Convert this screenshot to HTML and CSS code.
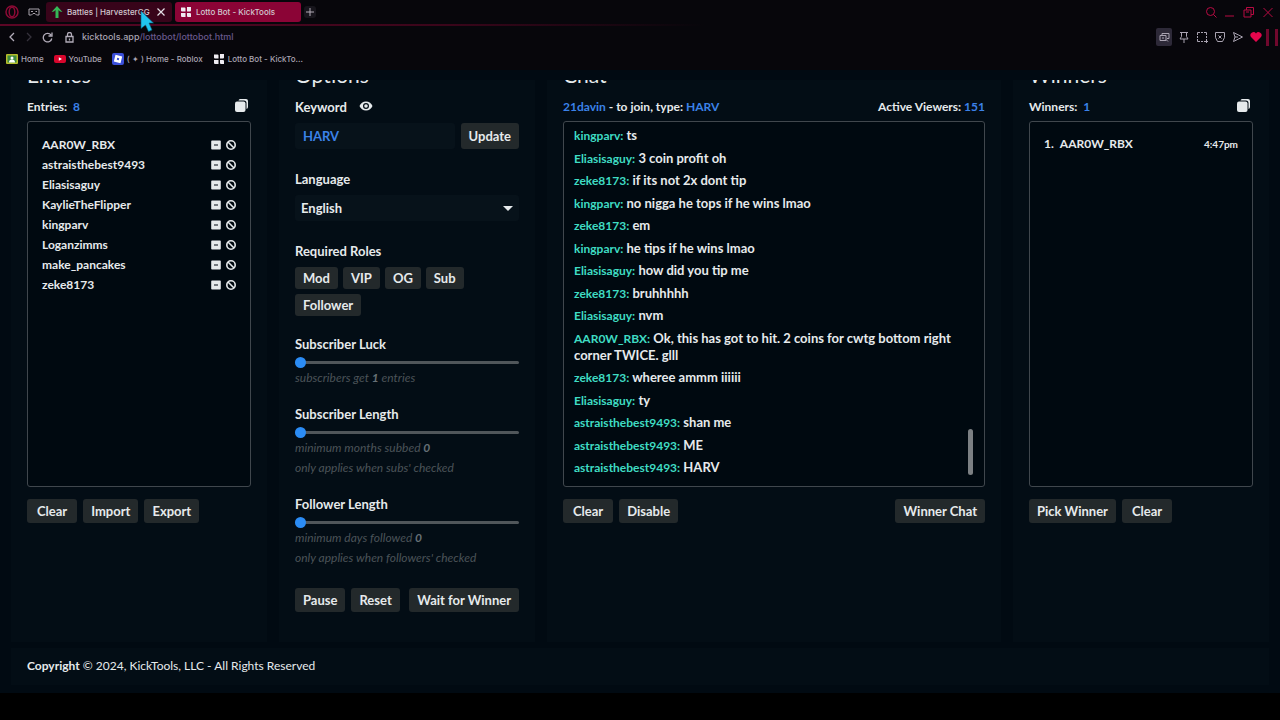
FILE: index.html
```
<!DOCTYPE html>
<html lang="en">
<head>
  <meta charset="utf-8">
  <title>Lotto Bot - KickTools</title>
  <link rel="stylesheet" href="styles.css">
</head>
<body>
  <svg class="sprite" width="0" height="0">
    <symbol id="copy" viewBox="0 0 14 14"><path d="M5 0h6a2 2 0 0 1 2 2v6a2 2 0 0 1-1.500 2V4a2.500 2.500 0 0 0-2.500-2.500H3.500A2 2 0 0 1 5 0z"/><rect x="0" y="2.500" width="10.500" height="10.500" rx="2"/></symbol>
    <symbol id="minus" viewBox="0 0 10 10"><path fill-rule="evenodd" d="M1 0.5h8a.8.8 0 0 1 .8.8v7.4a.8.8 0 0 1-.8.8H1a.8.8 0 0 1-.8-.8V1.300a.8.8 0 0 1 .8-.8zM3 4.400v1.200h4V4.400z"/></symbol>
    <symbol id="ban" viewBox="0 0 10 10"><g fill="none" stroke="currentColor" stroke-width="1.600"><circle cx="5" cy="5" r="4.200"/><path d="M2 2l6 6"/></g></symbol>
    <symbol id="tiles" viewBox="0 0 12 12"><path d="M1 1.500h3.500a1 1 0 0 1 1 1V5.500H2a1 1 0 0 1-1-1zM7 1h4v3.500a1 1 0 0 1-1 1H7zM1 7h4.500v4H2a1 1 0 0 1-1-1zM7 7h3a1 1 0 0 1 1 1v3H8a1 1 0 0 1-1-1z"/></symbol>
  </svg>

  <header class="browser">
    <div class="tab-row">
      <svg class="opera" width="14" height="14" viewBox="0 0 14 14" fill="none" stroke="#8c0a35"><circle cx="7" cy="7" r="6" stroke-width="1.500"/><ellipse cx="7" cy="7" rx="2.800" ry="4.800" stroke-width="1.500"/></svg>
      <svg class="pad" width="12" height="9" viewBox="0 0 12 9" fill="none" stroke="#a9a3ad"><path d="M1 1h10v6H8.500L7 5.500H5L3.500 7H1zM3 3.500h2M7.500 3.500h1.500"/></svg>
      <button class="tab">
        <svg width="12" height="12" viewBox="0 0 12 12"><path d="M6 0l5.500 6-2.500-.5L7.500 4v8h-3V4L3 5.500 .5 6z" fill="#35b857"/></svg>
        <span>Battles | HarvesterGG</span>
        <svg class="tab-close" width="8" height="8" viewBox="0 0 8 8" stroke="#e4dfe6" stroke-width="1.200"><path d="M.5.5l7 7M7.500.5l-7 7"/></svg>
      </button>
      <button class="tab active">
        <svg width="12" height="12" fill="#f3edf1"><use href="#tiles"/></svg>
        <span>Lotto Bot - KickTools</span>
      </button>
      <button class="new-tab" aria-label="New tab"><svg width="8" height="8" viewBox="0 0 8 8" stroke="#b5aeb9"><path d="M4 0v8M0 4h8"/></svg></button>
      <div class="window-icons">
        <svg width="12" height="12" viewBox="0 0 12 12"><circle cx="5.500" cy="5.500" r="4"/><path d="M8.500 8.500l3 3"/></svg>
        <svg width="12" height="12" viewBox="0 0 12 12"><path d="M1 10h9"/></svg>
        <svg width="12" height="12" viewBox="0 0 12 12"><path d="M1 4h7v7H1zM3.500 4V1.500h7V8.500H8M3 6h3"/></svg>
        <svg width="12" height="12" viewBox="0 0 12 12"><path d="M1.500 2l9 9M10.500 2l-9 9"/></svg>
      </div>
    </div>

    <div class="address-row">
      <svg class="nav-icon" width="8" height="10" viewBox="0 0 8 10"><path d="M6 1L2 5l4 4"/></svg>
      <svg class="nav-icon off" width="8" height="10" viewBox="0 0 8 10"><path d="M2 1l4 4-4 4"/></svg>
      <svg class="nav-icon" width="11" height="11" viewBox="0 0 11 11"><path d="M9 3a4.300 4.300 0 1 0 .8 3.500M10 .5V4H6.500"/></svg>
      <svg class="nav-icon lock" width="9" height="11" viewBox="0 0 9 11"><path d="M1 4.500h7v5.500H1zM2.500 4.500V2.500a2 2 0 0 1 4 0v2M4.500 6.500v2"/></svg>
      <p class="url">kicktools.app<span>/lottobot/lottobot.html</span></p>
      <div class="tool-icons">
        <svg class="boxed" width="16" height="18" viewBox="0 0 16 18"><path d="M6 7V5.500h7v5h-2M4 7.500h6v5H4zM6 10l2 0M10 11.500l2 2"/></svg>
        <svg width="12" height="12" viewBox="0 0 12 12"><path d="M2 1.500h8M3.500 1.500v4L2 8h8L8.500 5.500v-4M6 8v4"/></svg>
        <svg width="12" height="12" viewBox="0 0 12 12"><path d="M1.500 4V1.500H4M5 1.500h2M8 1.500h2.500V4M10.500 5v2M1.500 5v2M1.500 8v2.500H4M5 10.500h2M8 10.500h4M10.500 8v4"/></svg>
        <svg width="12" height="12" viewBox="0 0 12 12"><path d="M1.500 1.500h9v5L8.500 10.500h-5l-2-4zM4.500 4.500l3 3M7.500 4.500l-3 3"/></svg>
        <svg width="12" height="12" viewBox="0 0 12 12"><path d="M1.500 1.500L10.500 6l-9 4.500L3 6zM3 6h3"/></svg>
        <svg class="heart" width="12" height="12" viewBox="0 0 12 12"><path d="M6 11L1 6a3 3 0 0 1 5-3.500A3 3 0 0 1 11 6z"/></svg>
        <span class="bars"></span>
      </div>
    </div>

    <nav class="bookmarks">
      <a href="#"><svg width="12" height="10" viewBox="0 0 12 10"><rect width="12" height="10" rx="1" fill="#b7bd2b"/><rect x="1.500" y="1.500" width="9" height="7" fill="#3c8a3f"/><circle cx="6" cy="4" r="1.500" fill="#fff"/><path d="M3 8.500a3 3 0 0 1 6 0z" fill="#fff"/></svg>Home</a>
      <a href="#"><svg width="12" height="10" viewBox="0 0 12 10"><rect y="1" width="12" height="8" rx="2" fill="#d9062c"/><path d="M4.800 3.200L8 5 4.800 6.800z" fill="#fff"/></svg>YouTube</a>
      <a href="#"><svg width="12" height="12" viewBox="0 0 12 12"><rect width="12" height="12" rx="2" fill="#3b4fd8"/><path fill="#fff" fill-rule="evenodd" d="M3.500 1.800l6.700 1.700-1.700 6.700-6.700-1.700zM5.200 4.800l-.4 2 2 .4.400-2z"/></svg>( ✦ ) Home - Roblox</a>
      <a href="#"><svg class="tiles" width="12" height="12"><use href="#tiles"/></svg>Lotto Bot - KickTo...</a>
    </nav>
    <svg class="cursor" width="15" height="24" viewBox="0 0 15 24"><path d="M1 1l12.500 12H9l3 7-3.500 1.500L5.500 15 1 18.500z" fill="#20c4ee" stroke="#0b5d78" stroke-width=".6"/></svg>
  </header>

  <div class="page">
    <main class="columns">
      <section class="panel">
        <h2>Entries</h2>
        <div class="panel-info">
          <span>Entries: &nbsp;<b>8</b></span>
          <button class="icon-button" aria-label="Copy entries"><svg width="14" height="14"><use href="#copy"/></svg></button>
        </div>
        <ul class="box entries" id="entries"></ul>
        <div class="buttons">
          <button class="btn wide">Clear</button>
          <button class="btn">Import</button>
          <button class="btn">Export</button>
        </div>
      </section>

      <section class="panel">
        <h2>Options</h2>
        <div class="options">
          <div class="fields">
            <div class="field">
              <div class="label-row">
                <label for="keyword">Keyword</label>
                <svg width="14" height="10" viewBox="0 0 14 10"><path fill-rule="evenodd" d="M7 .5C10 .5 12.500 2.500 13.500 5 12.500 7.500 10 9.500 7 9.500S1.500 7.500.5 5C1.500 2.500 4 .5 7 .5zM7 2a3 3 0 1 0 0 6 3 3 0 0 0 0-6z"/><circle cx="7" cy="5" r="1.800"/></svg>
              </div>
              <div class="keyword-row">
                <input type="text" id="keyword" value="HARV">
                <button class="btn update">Update</button>
              </div>
            </div>
            <div class="field">
              <label for="language">Language</label>
              <div class="select-wrap">
                <select id="language"><option>English</option></select>
              </div>
            </div>
            <div class="field">
              <span>Required Roles</span>
              <div class="roles">
                <button class="btn">Mod</button>
                <button class="btn">VIP</button>
                <button class="btn">OG</button>
                <button class="btn">Sub</button>
                <button class="btn">Follower</button>
              </div>
            </div>
          </div>
          <div class="sliders">
            <div class="slider">
              <label for="luck">Subscriber Luck</label>
              <input type="range" id="luck" min="1" max="10" value="1">
              <p>subscribers get <b>1</b> entries</p>
            </div>
            <div class="slider">
              <label for="sub-length">Subscriber Length</label>
              <input type="range" id="sub-length" min="0" max="12" value="0">
              <p>minimum months subbed <b>0</b></p>
              <p>only applies when subs' checked</p>
            </div>
            <div class="slider">
              <label for="follow-length">Follower Length</label>
              <input type="range" id="follow-length" min="0" max="30" value="0">
              <p>minimum days followed <b>0</b></p>
              <p>only applies when followers' checked</p>
            </div>
          </div>
          <div class="buttons last-right">
            <button class="btn">Pause</button>
            <button class="btn">Reset</button>
            <button class="btn">Wait for Winner</button>
          </div>
        </div>
      </section>

      <section class="panel">
        <h2>Chat</h2>
        <div class="panel-info">
          <span><b>21davin</b> - to join, type: <b>HARV</b></span>
          <span>Active Viewers: <b>151</b></span>
        </div>
        <div class="box chat">
          <p><b>kingparv:</b> ts</p>
          <p><b>Eliasisaguy:</b> 3 coin profit oh</p>
          <p><b>zeke8173:</b> if its not 2x dont tip</p>
          <p><b>kingparv:</b> no nigga he tops if he wins lmao</p>
          <p><b>zeke8173:</b> em</p>
          <p><b>kingparv:</b> he tips if he wins lmao</p>
          <p><b>Eliasisaguy:</b> how did you tip me</p>
          <p><b>zeke8173:</b> bruhhhhh</p>
          <p><b>Eliasisaguy:</b> nvm</p>
          <p><b>AAR0W_RBX:</b> Ok, this has got to hit. 2 coins for cwtg bottom right corner TWICE. glll</p>
          <p><b>zeke8173:</b> wheree ammm iiiiii</p>
          <p><b>Eliasisaguy:</b> ty</p>
          <p><b>astraisthebest9493:</b> shan me</p>
          <p><b>astraisthebest9493:</b> ME</p>
          <p><b>astraisthebest9493:</b> HARV</p>
          <span class="scroll-thumb"></span>
        </div>
        <div class="buttons last-right">
          <button class="btn wide">Clear</button>
          <button class="btn">Disable</button>
          <button class="btn">Winner Chat</button>
        </div>
      </section>

      <section class="panel">
        <h2>Winners</h2>
        <div class="panel-info">
          <span>Winners: &nbsp;<b>1</b></span>
          <button class="icon-button" aria-label="Copy winners"><svg width="14" height="14"><use href="#copy"/></svg></button>
        </div>
        <ol class="box winners">
          <li><span>1.</span><span>AAR0W_RBX</span><time>4:47pm</time></li>
        </ol>
        <div class="buttons">
          <button class="btn">Pick Winner</button>
          <button class="btn wide">Clear</button>
        </div>
      </section>
    </main>
    <footer class="footer"><b>Copyright</b> © 2024, KickTools, LLC - All Rights Reserved</footer>
  </div>

  <script src="script.js"></script>
</body>
</html>
```
FILE: styles.css
```
* {
  box-sizing: border-box;
}

body {
  margin: 0;
  min-height: 100vh;
  overflow: hidden;
  background: #000;
  color: #e6eaec;
  font: 700 13px/16px Lato, sans-serif;
}

h2, p, ul, ol {
  margin: 0;
  padding: 0;
}

button, input, select {
  font: inherit;
  color: inherit;
  border: none;
}

button {
  cursor: pointer;
  white-space: nowrap;
}

svg {
  display: block;
  flex: none;
  fill: currentColor;
}

b {
  font-weight: inherit;
}

.sprite {
  position: absolute;
}

/* browser bar */
.browser {
  position: relative;
  height: 70px;
  background: #07060b;
  color: #aaa4b2;
  font: 500 8px/12px Inter, sans-serif;
}

.tab-row {
  display: flex;
  align-items: center;
  height: 26px;
  padding: 0 6px 0 5px;
  border-bottom: 2px solid;
  border-image: linear-gradient(90deg, #5c0625, #3a051a 35%, #07060b 55%) 1;
}

.opera {
  margin-right: 9px;
  fill: none;
}

.pad {
  margin-right: 6px;
  fill: none;
}

.tab {
  display: flex;
  align-items: center;
  gap: 4px;
  width: 126px;
  height: 20px;
  margin-right: 3px;
  padding: 0 7px 0 5px;
  border-radius: 3px;
  background: #38041a;
  color: #d3c8d0;
}

.tab.active {
  background: #8b0436;
}

.tab-close {
  margin-left: auto;
}

.new-tab {
  padding: 2px;
  border-radius: 3px;
  background: #17151c;
}

.window-icons {
  display: flex;
  gap: 7px;
  margin-left: auto;
}

.window-icons svg {
  fill: none;
  stroke: #b80b43;
}

.address-row {
  display: flex;
  align-items: center;
  height: 22px;
  padding: 0 2px 0 8px;
}

.nav-icon {
  margin-right: 9px;
  fill: none;
  stroke: #b3adba;
  stroke-width: 1.3;
}

.nav-icon.off {
  stroke: #35313b;
}

.lock {
  margin: 0 8px 0 3px;
}

.url {
  font-size: 9px;
}

.url span {
  color: #69598c;
}

.tool-icons {
  display: flex;
  align-items: center;
  gap: 6px;
  margin-left: auto;
}

.tool-icons svg {
  fill: none;
  stroke: #aaa4b2;
}

.tool-icons .boxed {
  background: #2d2938;
  border-radius: 2px;
}

.tool-icons .heart {
  fill: #e5064d;
  stroke: none;
}

.bars {
  width: 12px;
  height: 17px;
  margin-left: -2px;
  border: solid #70082d;
  border-width: 0 3px;
}

.bookmarks {
  display: flex;
  align-items: center;
  gap: 10px;
  height: 22px;
  padding-left: 6px;
}

.bookmarks a {
  display: flex;
  align-items: center;
  gap: 3px;
  color: inherit;
  text-decoration: none;
}

.tab.active svg, .tiles {
  fill: #f0ecf2;
}

.cursor {
  position: absolute;
  left: 140px;
  top: 10px;
}

/* page */
.page {
  padding: 10px 11px 8px;
  background: #010a12;
}

.columns {
  display: grid;
  grid-template-columns: 256px 256px 1fr 256px;
  gap: 12px;
  overflow: hidden;
}

.panel {
  padding: 0 16px 30px;
  background: #030d15;
}

.panel h2 {
  margin: -17px 0 12px;
  font-size: 21px;
  line-height: 24px;
  font-weight: 400;
}

.panel-info {
  display: flex;
  justify-content: space-between;
  height: 22px;
  font-size: 12px;
}

.panel b {
  color: #3b82e8;
}

.icon-button {
  height: 14px;
  padding: 0;
  margin-right: 2px;
  background: none;
}

.box {
  position: relative;
  height: 366px;
  margin-bottom: 12px;
  border: 1px solid #40474d;
  border-radius: 3px;
  background: #000910;
  list-style: none;
}

.entries {
  padding: 13px 14px;
  font-size: 12px;
}

.entries li {
  display: flex;
  align-items: center;
  gap: 5px;
  line-height: 20px;
}

.entries span {
  margin-right: auto;
}

.entries .icon-button {
  margin-right: 0;
}

.buttons {
  display: flex;
  gap: 6px;
}

.last-right .btn:last-child {
  margin-left: auto;
}

.btn {
  height: 24px;
  padding: 0 8px;
  border-radius: 3px;
  background: #23292b;
}

.btn.wide {
  padding: 0 10px;
}

.chat {
  display: flex;
  flex-direction: column;
  justify-content: space-between;
  padding: 5px 24px 10px 10px;
  line-height: 17px;
}

.panel .chat b {
  color: #3fdcc3;
  font-size: 12px;
}

.scroll-thumb {
  position: absolute;
  right: 11px;
  bottom: 11px;
  width: 5px;
  height: 46px;
  border-radius: 3px;
  background: #7c8083;
}

.winners {
  padding: 14px 14px;
  font-size: 12px;
}

.winners li {
  display: flex;
  gap: 6px;
}

.winners time {
  margin-left: auto;
  font-size: 10px;
}

.options {
  display: flex;
  flex-direction: column;
  gap: 20px;
}

.fields {
  display: flex;
  flex-direction: column;
  gap: 22px;
}

.field {
  display: flex;
  flex-direction: column;
  gap: 8px;
}

.label-row {
  display: flex;
  gap: 12px;
}

.label-row svg {
  margin-top: 2px;
}

.keyword-row {
  display: flex;
  gap: 6px;
}

.keyword-row input {
  flex: 1;
  min-width: 0;
  padding: 0 8px;
  border-radius: 3px;
  background: #07121a;
  color: #3b82e8;
}

.btn.update {
  height: 26px;
}

.select-wrap {
  position: relative;
}

.select-wrap::after {
  content: "";
  position: absolute;
  right: 6px;
  top: 11px;
  border: 5px solid transparent;
  border-top-color: #e6eaec;
  border-bottom: none;
}

select {
  display: block;
  width: 100%;
  height: 26px;
  padding: 0 6px;
  border-radius: 3px;
  background: #07121a;
  appearance: none;
}

.roles {
  display: flex;
  flex-wrap: wrap;
  gap: 5px 5px;
}

.roles .btn {
  height: 22px;
}

.sliders {
  display: flex;
  flex-direction: column;
  gap: 18px;
}

.slider label {
  display: block;
}

.slider input {
  display: block;
  width: 100%;
  height: 12px;
  margin: 4px 0 0;
  background: none;
  appearance: none;
}

.slider input::-webkit-slider-runnable-track {
  height: 3px;
  border-radius: 2px;
  background: #50565a;
}

.slider input::-webkit-slider-thumb {
  width: 11px;
  height: 11px;
  margin-top: -4px;
  border-radius: 50%;
  background: #2b8cf5;
  appearance: none;
}

.slider p {
  color: #4b5358;
  font-size: 12px;
  line-height: 20px;
  font-weight: 400;
  font-style: italic;
}

.slider p b {
  color: #667075;
  font-weight: 700;
}

.footer {
  margin-top: 6px;
  padding: 10px 16px 11px;
  background: #030d15;
  font-size: 12px;
  font-weight: 400;
}

.footer b {
  font-weight: 700;
}
```
FILE: script.js
```
const names = ['AAR0W_RBX', 'astraisthebest9493', 'Eliasisaguy', 'KaylieTheFlipper', 'kingparv', 'Loganzimms', 'make_pancakes', 'zeke8173'];
const list = document.getElementById('entries');

names.forEach(name => {
  const row = document.createElement('li');
  row.innerHTML = `<span>${name}</span>
    <button class="icon-button" aria-label="Remove ${name}"><svg width="10" height="14"><use href="#minus"/></svg></button>
    <button class="icon-button" aria-label="Ban ${name}"><svg width="10" height="14"><use href="#ban"/></svg></button>`;
  list.appendChild(row);
});
```
